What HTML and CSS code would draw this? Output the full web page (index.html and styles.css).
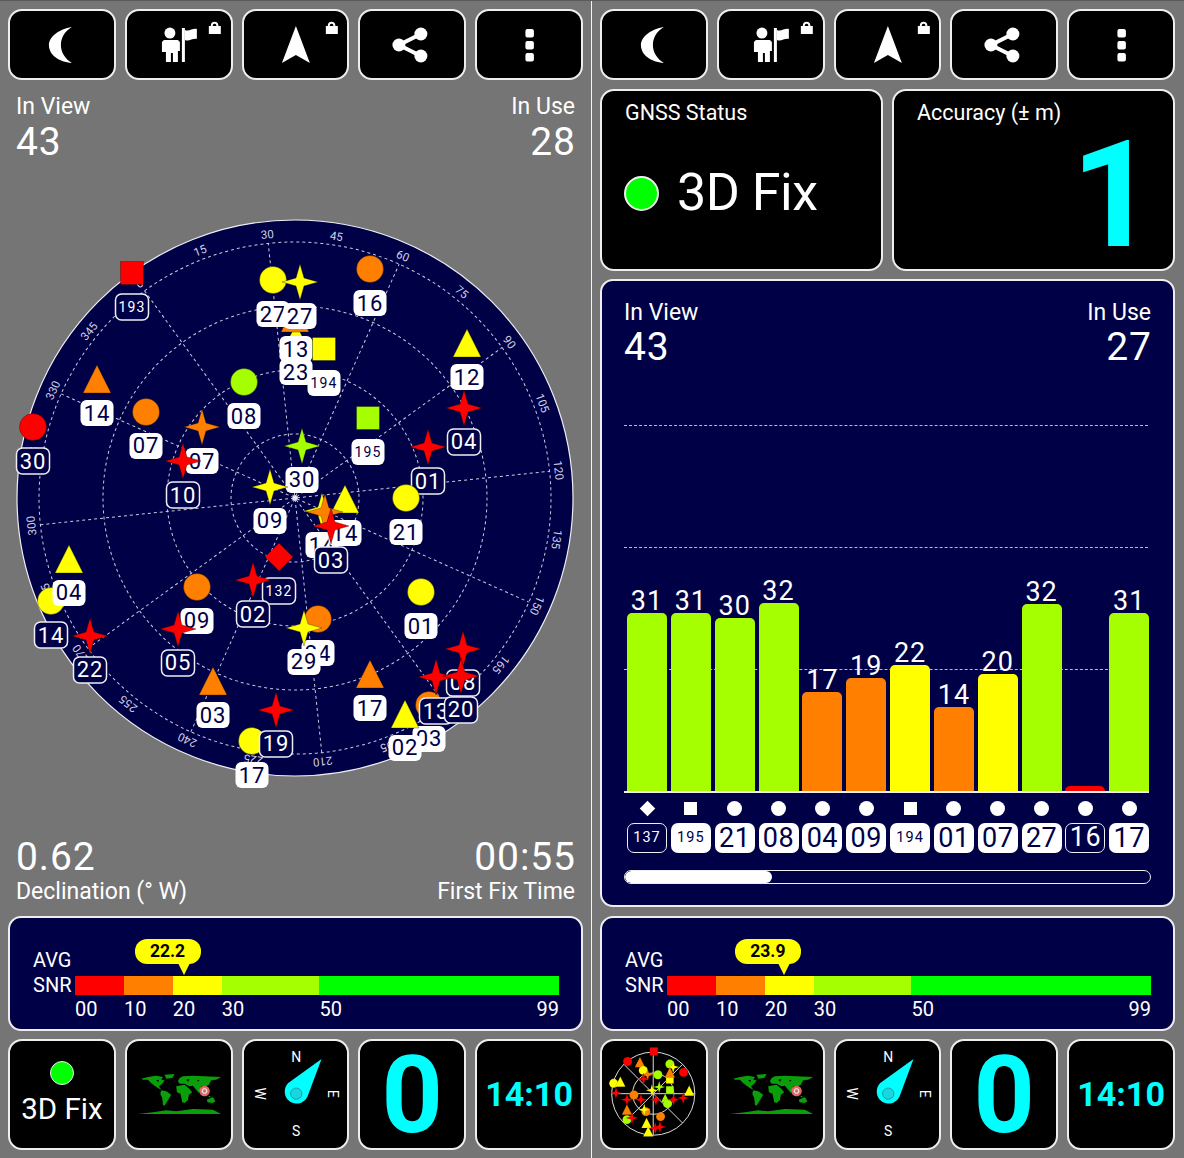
FILE: index.html
```html
<!DOCTYPE html>
<html lang="en">
<head>
<meta charset="utf-8">
<title>GPS Test</title>
<link rel="stylesheet" href="styles.css">
</head>
<body>
<svg class="defs" aria-hidden="true">
  <defs>
    <path id="star" d="M0-18L4-4 18 0 4 4 0 18-4 4-18 0-4-4Z"/>
    <path id="tri" d="M0-14L14 14H-14Z"/>
    <circle id="cir" r="13.5"/>
    <rect id="sq" x="-11.5" y="-11.5" width="23" height="23"/>
    <path id="dia" d="M0-14L14 0 0 14-14 0Z"/>
    <symbol id="i-moon" viewBox="2 2 104 67"><path class="ic" d="M64 18C51 20 41 28 41 36 41 46 51 53 64 54 57 50 53 43 53 36 53 29 57 22 64 18Z"/></symbol>
    <symbol id="i-flag" viewBox="2 2 104 67">
      <circle class="ic" cx="45" cy="24" r="5.5"/>
      <path class="ic" d="M39 31H53L55 33V42H53V53H48V44H46V53H41V43H37V33Z"/>
      <path class="ic" d="M57 19H60V53H57Z"/>
      <path class="ic" d="M60 21C64 23 68 19 72 20V30C68 29 64 33 60 31Z"/>
      <path class="ic" d="M86 17V16A3.800 3.800 0 0 1 93.500 16V17H96V25H84V17ZM88 17H91.500V16A1.800 1.800 0 0 0 88 16Z"/>
    </symbol>
    <symbol id="i-nav" viewBox="2 2 104 67">
      <path class="ic" d="M54 17L68 54 54 46 40 54Z"/>
      <path class="ic" d="M86 17V16A3.800 3.800 0 0 1 93.500 16V17H96V25H84V17ZM88 17H91.500V16A1.800 1.800 0 0 0 88 16Z"/>
    </symbol>
    <symbol id="i-share" viewBox="2 2 104 67">
      <circle class="ic" cx="63" cy="25" r="6.5"/><circle class="ic" cx="41" cy="36" r="6.5"/><circle class="ic" cx="63" cy="47" r="6.5"/>
      <path class="il" d="M63 25L41 36 63 47"/>
    </symbol>
    <symbol id="i-dots" viewBox="2 2 104 67">
      <rect class="ic" x="50.500" y="20" width="8.500" height="8.500" rx="2"/><rect class="ic" x="50.500" y="32" width="8.500" height="8.500" rx="2"/><rect class="ic" x="50.500" y="44" width="8.500" height="8.500" rx="2"/>
    </symbol>
    <symbol id="i-world" viewBox="378 34 312 321">
      <g class="land">
        <path d="M421 147L441 142 466 138 486 142 481 150 491 152 484 162 474 170 481 180 471 175 461 168 448 158 441 150 426 150Z"/>
        <path d="M491 135L521 133 514 145 496 147Z"/>
        <path d="M481 182L496 185 511 195 501 212 491 228 486 225 484 205 478 192Z"/>
        <path d="M531 155L536 145 546 140 576 138 661 142 646 150 631 152 624 165 616 170 601 170 594 190 586 180 576 168 566 170 551 162 536 162Z"/>
        <path d="M526 170L551 165 566 178 574 188 564 195 561 212 551 220 544 218 539 192 528 188Z"/>
        <path d="M601 195L612 196 621 200 610 199ZM622 198L630 200 626 204Z"/>
        <path d="M618 210L636 202 644 215 636 220 620 218Z"/>
        <path d="M411 253L456 248 496 242 526 245 576 238 636 240 661 253Z"/>
      </g>
      <path class="sea" d="M466 152L474 150 472 158ZM556 150L566 148 562 156ZM590 150L596 152 590 156ZM520 140L524 145 518 146Z"/>
      <circle class="pin" cx="611" cy="184" r="16"/>
      <circle class="pin-in" cx="611" cy="184" r="7"/>
    </symbol>
    <symbol id="i-compass" viewBox="729 34 312 321">
      <path class="needle" d="M962 88L922 195A36 36 0 1 1 862 160Z"/>
      <circle class="needle-in" cx="886" cy="192" r="17"/>
      <text class="cp" x="886" y="97">N</text>
      <text class="cp" x="886" y="320">S</text>
      <text class="cp" transform="translate(981 192) rotate(90)">E</text>
      <text class="cp" transform="translate(761 192) rotate(90)">W</text>
    </symbol>
  </defs>
</svg>

<main class="screen">
  <section class="pane">
    <nav class="toolbar">
      <button class="tile"><svg class="fill"><use href="#i-moon"/></svg></button>
      <button class="tile"><svg class="fill"><use href="#i-flag"/></svg></button>
      <button class="tile"><svg class="fill"><use href="#i-nav"/></svg></button>
      <button class="tile"><svg class="fill"><use href="#i-share"/></svg></button>
      <button class="tile"><svg class="fill"><use href="#i-dots"/></svg></button>
    </nav>

    <div class="mid">
      <div class="stats">
        <div class="stat"><span class="cap">In View</span><span class="num">43</span></div>
        <div class="stat end"><span class="cap">In Use</span><span class="num">28</span></div>
      </div>

      <svg class="radar" viewBox="0 161 591 677">
        <circle class="disc" cx="295" cy="498" r="278"/>
        <g transform="translate(295 498) rotate(-36)">
          <g class="grid">
            <circle r="64"/><circle r="128"/><circle r="192"/><circle r="256"/>
            <path d="M0-256V256M-128-221.700L128 221.700M-221.700-128L221.700 128M-256 0H256M-221.700 128L221.700-128M-128 221.700L128-221.700"/>
          </g>
          <circle class="hub" r="2.500"/>
          <g class="ticks">
            <text transform="rotate(0) translate(0 -261)">0</text>
            <text transform="rotate(15) translate(0 -261)">15</text>
            <text transform="rotate(30) translate(0 -261)">30</text>
            <text transform="rotate(45) translate(0 -261)">45</text>
            <text transform="rotate(60) translate(0 -261)">60</text>
            <text transform="rotate(75) translate(0 -261)">75</text>
            <text transform="rotate(90) translate(0 -261)">90</text>
            <text transform="rotate(105) translate(0 -261)">105</text>
            <text transform="rotate(120) translate(0 -261)">120</text>
            <text transform="rotate(135) translate(0 -261)">135</text>
            <text transform="rotate(150) translate(0 -261)">150</text>
            <text transform="rotate(165) translate(0 -261)">165</text>
            <text transform="rotate(180) translate(0 -261)">180</text>
            <text transform="rotate(195) translate(0 -261)">195</text>
            <text transform="rotate(210) translate(0 -261)">210</text>
            <text transform="rotate(225) translate(0 -261)">225</text>
            <text transform="rotate(240) translate(0 -261)">240</text>
            <text transform="rotate(255) translate(0 -261)">255</text>
            <text transform="rotate(270) translate(0 -261)">270</text>
            <text transform="rotate(285) translate(0 -261)">285</text>
            <text transform="rotate(300) translate(0 -261)">300</text>
            <text transform="rotate(315) translate(0 -261)">315</text>
            <text transform="rotate(330) translate(0 -261)">330</text>
            <text transform="rotate(345) translate(0 -261)">345</text>
          </g>
        </g>

        <g class="s r d" transform="translate(132 273)"><use href="#sq"/><rect/><text class="n3" y="39">193</text></g>
        <g class="s r d" transform="translate(33 427)"><use href="#cir"/><rect/><text y="42">30</text></g>
        <g class="s o" transform="translate(97 379)"><use href="#tri"/><rect/><text y="42">14</text></g>
        <g class="s o" transform="translate(146 412)"><use href="#cir"/><rect/><text y="41">07</text></g>
        <g class="s o" transform="translate(202 427)"><use href="#star"/><rect/><text y="42">07</text></g>
        <g class="s r d" transform="translate(183 461)"><use href="#star"/><rect/><text y="42">10</text></g>
        <g class="s l" transform="translate(244 382)"><use href="#cir"/><rect/><text y="42">08</text></g>
        <g class="s y" transform="translate(296 338)"><use href="#tri"/></g>
        <g class="s o" transform="translate(295 318)"><use href="#tri"/></g>
        <g class="s y" transform="translate(273 280)"><use href="#cir"/><rect/><text y="42">27</text></g>
        <g class="s y" transform="translate(300 282)"><use href="#star"/><rect/><text y="42">27</text></g>
        <g class="s o" transform="translate(296 315)"><rect/><text y="42">13</text></g>
        <g class="s y" transform="translate(296 338)"><rect/><text y="42">23</text></g>
        <g class="s o" transform="translate(370 269)"><use href="#cir"/><rect/><text y="42">16</text></g>
        <g class="s y" transform="translate(324 349)"><use href="#sq"/><rect/><text class="n3" y="39">194</text></g>
        <g class="s l" transform="translate(368 418)"><use href="#sq"/><rect/><text class="n3" y="39">195</text></g>
        <g class="s y" transform="translate(467 343)"><use href="#tri"/><rect/><text y="42">12</text></g>
        <g class="s r d" transform="translate(464 408)"><use href="#star"/><rect/><text y="41">04</text></g>
        <g class="s r d" transform="translate(428 447)"><use href="#star"/><rect/><text y="42">01</text></g>
        <g class="s y" transform="translate(406 498)"><use href="#cir"/><rect/><text y="42">21</text></g>
        <g class="s l" transform="translate(302 446)"><use href="#star"/><rect/><text y="41">30</text></g>
        <g class="s y" transform="translate(270 487)"><use href="#star"/><rect/><text y="41">09</text></g>
        <g class="s y" transform="translate(322 511)"><use href="#star"/><rect/><text y="42">14</text></g>
        <g class="s y" transform="translate(345 499)"><use href="#tri"/><rect/><text y="42">14</text></g>
        <g class="s o" transform="translate(325 512)"><use href="#star"/></g>
        <g class="s r d" transform="translate(331 526)"><use href="#star"/><rect/><text y="42">03</text></g>
        <g class="s r" transform="translate(279 557)"><use href="#dia"/></g>
        <g class="s r d" transform="translate(279 557)"><rect/><text class="n3" y="39">132</text></g>
        <g class="s r d" transform="translate(253 580)"><use href="#star"/><rect/><text y="42">02</text></g>
        <g class="s o" transform="translate(197 587)"><use href="#cir"/><rect/><text y="41">09</text></g>
        <g class="s r d" transform="translate(178 629)"><use href="#star"/><rect/><text y="41">05</text></g>
        <g class="s y d" transform="translate(51 601)"><use href="#cir"/><rect/><text y="42">14</text></g>
        <g class="s y" transform="translate(69 559)"><use href="#tri"/><rect/><text y="41">04</text></g>
        <g class="s r d" transform="translate(90 636)"><use href="#star"/><rect/><text y="41">22</text></g>
        <g class="s o" transform="translate(213 681)"><use href="#tri"/><rect/><text y="42">03</text></g>
        <g class="s y" transform="translate(252 741)"><use href="#cir"/><rect/><text y="42">17</text></g>
        <g class="s r d" transform="translate(276 710)"><use href="#star"/><rect/><text y="41">19</text></g>
        <g class="s o" transform="translate(318 619)"><use href="#cir"/><rect/><text y="42">24</text></g>
        <g class="s y" transform="translate(304 628)"><use href="#star"/><rect/><text y="41">29</text></g>
        <g class="s y" transform="translate(421 592)"><use href="#cir"/><rect/><text y="42">01</text></g>
        <g class="s o" transform="translate(370 674)"><use href="#tri"/><rect/><text y="42">17</text></g>
        <g class="s o" transform="translate(429 705)"><use href="#cir"/><rect/><text y="41">03</text></g>
        <g class="s r d" transform="translate(463 649)"><use href="#star"/><rect/><text y="41">08</text></g>
        <g class="s r d" transform="translate(436 677)"><use href="#star"/><rect/><text y="42">13</text></g>
        <g class="s r d" transform="translate(461 676)"><use href="#star"/><rect/><text y="41">20</text></g>
        <g class="s y" transform="translate(405 714)"><use href="#tri"/><rect/><text y="41">02</text></g>
      </svg>

      <div class="stats">
        <div class="stat"><span class="num">0.62</span><span class="cap">Declination (° W)</span></div>
        <div class="stat end"><span class="num">00:55</span><span class="cap">First Fix Time</span></div>
      </div>
    </div>

    <div class="snr">
      <div class="snr-names"><span>AVG</span><span>SNR</span></div>
      <div class="snr-scale">
        <div class="snr-bar">
          <i class="seg c-r" style="flex-grow:10"></i><i class="seg c-o" style="flex-grow:10"></i><i class="seg c-y" style="flex-grow:10"></i><i class="seg c-l" style="flex-grow:20"></i><i class="seg c-g" style="flex-grow:49"></i>
          <div class="bubble" style="left:22.42%">22.2</div>
        </div>
        <div class="snr-ticks">
          <span style="flex-grow:10">00</span><span style="flex-grow:10">10</span><span style="flex-grow:10">20</span><span style="flex-grow:20">30</span><span class="last" style="flex-grow:49"><b>50</b><b>99</b></span>
        </div>
      </div>
    </div>

    <div class="dock">
      <div class="tile fixcell"><i class="dot"></i><span>3D Fix</span></div>
      <div class="tile"><svg class="fill"><use href="#i-world"/></svg></div>
      <div class="tile"><svg class="fill"><use href="#i-compass"/></svg></div>
      <div class="tile big">0</div>
      <div class="tile clock">14:10</div>
    </div>
  </section>

  <section class="pane">
    <nav class="toolbar">
      <button class="tile"><svg class="fill"><use href="#i-moon"/></svg></button>
      <button class="tile"><svg class="fill"><use href="#i-flag"/></svg></button>
      <button class="tile"><svg class="fill"><use href="#i-nav"/></svg></button>
      <button class="tile"><svg class="fill"><use href="#i-share"/></svg></button>
      <button class="tile"><svg class="fill"><use href="#i-dots"/></svg></button>
    </nav>

    <div class="duo">
      <div class="tile card">
        <span class="cap plain">GNSS Status</span>
        <div class="fixrow"><i class="dot large"></i><span>3D Fix</span></div>
      </div>
      <div class="tile card">
        <span class="cap plain">Accuracy (± m)</span>
        <div class="acc">1</div>
      </div>
    </div>

    <div class="panel">
      <div class="stats inner">
        <div class="stat"><span class="cap">In View</span><span class="num">43</span></div>
        <div class="stat end"><span class="cap">In Use</span><span class="num">27</span></div>
      </div>
      <div class="chart">
        <div class="lines"><i></i><i></i><i></i></div>
        <div class="bars">
          <div class="col"><span>31</span><i class="c-l" style="height:178px"></i></div>
          <div class="col"><span>31</span><i class="c-l" style="height:178px"></i></div>
          <div class="col"><span>30</span><i class="c-l" style="height:173px"></i></div>
          <div class="col"><span>32</span><i class="c-l" style="height:188px"></i></div>
          <div class="col"><span>17</span><i class="c-o" style="height:99px"></i></div>
          <div class="col"><span>19</span><i class="c-o" style="height:113px"></i></div>
          <div class="col"><span>22</span><i class="c-y" style="height:126px"></i></div>
          <div class="col"><span>14</span><i class="c-o" style="height:84px"></i></div>
          <div class="col"><span>20</span><i class="c-y" style="height:117px"></i></div>
          <div class="col"><span>32</span><i class="c-l" style="height:187px"></i></div>
          <div class="col"><i class="c-r" style="height:5px"></i></div>
          <div class="col"><span>31</span><i class="c-l" style="height:178px"></i></div>
        </div>
      </div>
      <div class="marks">
        <i class="m-d"></i><i class="m-s"></i><i class="m-c"></i><i class="m-c"></i><i class="m-c"></i><i class="m-c"></i><i class="m-s"></i><i class="m-c"></i><i class="m-c"></i><i class="m-c"></i><i class="m-c"></i><i class="m-c"></i>
      </div>
      <div class="ids">
        <span class="id dark tiny">137</span><span class="id tiny">195</span><span class="id">21</span><span class="id">08</span><span class="id">04</span><span class="id">09</span><span class="id tiny">194</span><span class="id">01</span><span class="id">07</span><span class="id">27</span><span class="id dark">16</span><span class="id">17</span>
      </div>
      <div class="scroll"><i></i></div>
    </div>

    <div class="snr">
      <div class="snr-names"><span>AVG</span><span>SNR</span></div>
      <div class="snr-scale">
        <div class="snr-bar">
          <i class="seg c-r" style="flex-grow:10"></i><i class="seg c-o" style="flex-grow:10"></i><i class="seg c-y" style="flex-grow:10"></i><i class="seg c-l" style="flex-grow:20"></i><i class="seg c-g" style="flex-grow:49"></i>
          <div class="bubble" style="left:24.14%">23.9</div>
        </div>
        <div class="snr-ticks">
          <span style="flex-grow:10">00</span><span style="flex-grow:10">10</span><span style="flex-grow:10">20</span><span style="flex-grow:20">30</span><span class="last" style="flex-grow:49"><b>50</b><b>99</b></span>
        </div>
      </div>
    </div>

    <div class="dock">
      <div class="tile">
        <svg class="fill" viewBox="18 34 312 321">
          <g class="mini-grid"><circle cx="172" cy="192" r="125"/><circle cx="172" cy="192" r="62"/><path d="M172 67V317M47 192H297M84 104L260 280M84 280L260 104"/></g>
          <g class="s r"><use href="#sq" transform="translate(174 65) scale(1.05)"/><use href="#cir" x="95" y="95"/></g>
          <g class="s o"><use href="#tri" transform="translate(132 97) scale(1.1)"/></g>
          <g class="s l"><use href="#cir" x="222" y="103"/></g>
          <g class="s y"><use href="#star" x="232" y="112"/><use href="#cir" x="142" y="122"/></g>
          <g class="s o"><use href="#star" x="155" y="135"/></g>
          <g class="s r"><use href="#star" x="143" y="148"/></g>
          <g class="s l"><use href="#cir" x="186" y="135"/></g>
          <g class="s y"><use href="#sq" x="222" y="150"/></g>
          <g class="s o"><use href="#tri" transform="translate(222 128) scale(1.1)"/></g>
          <g class="s r"><use href="#cir" x="263" y="128"/></g>
          <g class="s y"><use href="#cir" x="53" y="161"/><use href="#tri" transform="translate(73 156) scale(1.1)"/><use href="#star" x="168" y="182"/></g>
          <g class="s l"><use href="#star" x="190" y="172"/><use href="#sq" x="222" y="181"/></g>
          <g class="s y"><use href="#tri" transform="translate(280 183) scale(1.1)"/></g>
          <g class="s r"><use href="#star" x="60" y="190"/></g>
          <g class="s o"><use href="#cir" x="114" y="196"/></g>
          <g class="s l"><use href="#tri" transform="translate(208 205) scale(.9)"/><use href="#cir" x="215" y="222"/></g>
          <g class="s r"><use href="#star" x="93" y="210"/><use href="#star" x="135" y="210"/><use href="#star" x="180" y="210"/><use href="#star" x="233" y="210"/><use href="#star" x="262" y="205"/></g>
          <g class="s o"><use href="#tri" transform="translate(93 240) scale(1.1)"/><use href="#cir" x="150" y="246"/></g>
          <g class="s y"><use href="#star" x="145" y="240"/></g>
          <g class="s o"><use href="#cir" x="194" y="261"/></g>
          <g class="s l"><use href="#cir" x="93" y="270"/></g>
          <g class="s r"><use href="#star" x="108" y="265"/></g>
          <g class="s y"><use href="#tri" transform="translate(152 280) scale(1.1)"/></g>
          <g class="s r"><use href="#star" x="178" y="296"/><use href="#star" x="192" y="292"/></g>
          <g class="s y"><use href="#tri" transform="translate(157 305) scale(1.1)"/></g>
        </svg>
      </div>
      <div class="tile"><svg class="fill"><use href="#i-world"/></svg></div>
      <div class="tile"><svg class="fill"><use href="#i-compass"/></svg></div>
      <div class="tile big">0</div>
      <div class="tile clock">14:10</div>
    </div>
  </section>
</main>
</body>
</html>
```

FILE: styles.css
```css
* { box-sizing: border-box; }
html, body { margin: 0; padding: 0; }
body {
  width: 1184px;
  height: 1158px;
  overflow: hidden;
  background: #757575;
  color: #fff;
  font-family: Roboto, "Liberation Sans", sans-serif;
}
.defs { width: 0; height: 0; display: block; }
.screen { display: flex; width: 1184px; height: 1158px; border-top: 1px solid #5a5a5a; }
.pane {
  width: 592px;
  height: 1157px;
  padding: 8px 8px 7px 8px;
  display: flex;
  flex-direction: column;
  gap: 9px;
  border-right: 1px solid #f4f4f4;
}
.pane:last-child { border-right: 0; padding-right: 9px; }

.tile {
  background: #000;
  border: 2px solid #eee;
  border-radius: 14px;
  padding: 0;
  margin: 0;
  color: #fff;
  min-width: 0;
}
.fill { display: block; width: 100%; height: 100%; }
.toolbar .fill { height: 67px; }
.dock .fill { height: 107px; }
.ic { fill: #fff; }
.il { fill: none; stroke: #fff; stroke-width: 4; }

.toolbar, .dock {
  display: grid;
  grid-template-columns: repeat(5, minmax(0, 1fr));
  column-gap: 9px;
}
.toolbar { height: 71px; flex: none; grid-template-rows: 71px; }
.dock { height: 111px; flex: none; grid-template-rows: 111px; }

.mid {
  flex: none;
  height: 818px;
  margin: 0 -8px;
  padding: 5px 0 2px;
  display: flex;
  flex-direction: column;
}
.stats { display: flex; justify-content: space-between; padding: 0 16px; flex: none; }
.stat { display: flex; flex-direction: column; }
.stat.end { align-items: flex-end; }
.cap { font-size: 23px; line-height: 26px; font-weight: 400; }
.cap.plain { font-size: 21.5px; }
.num { font-size: 39px; line-height: 38px; font-weight: 400; letter-spacing: .9px; }
.stat.end .num { margin-right: -.9px; }
.cap + .num, .num + .cap { margin-top: 3px; }
.inner .cap + .num { margin-top: 2px; }
.radar { display: block; flex: none; width: 591px; height: 677px; }

.disc { fill: #000046; stroke: #eeeef4; stroke-width: 1.2; }
.grid circle, .grid path { fill: none; stroke: #c9cbe0; stroke-width: 1; stroke-dasharray: 3 3; }
.hub { fill: #e8e8f0; }
.ticks text { fill: #cfd1e4; font-size: 11.5px; text-anchor: middle; }

.s { stroke: none; }
.s use { stroke: rgba(0, 0, 0, .3); stroke-width: 1; }
.r { fill: #f00; }
.o { fill: #ff8000; }
.y { fill: #ff0; }
.l { fill: #a6ff00; }
.s rect { x: -16.5px; y: 21px; width: 33px; height: 26px; rx: 6px; fill: #fff; stroke: none; }
.s text { fill: #000046; stroke: none; font-size: 22px; font-weight: 400; text-anchor: middle; letter-spacing: 1px; }
.s text.n3 { font-size: 14px; font-weight: 400; letter-spacing: 1.2px; }
.s.d rect { fill: #000046; stroke: #eeeef4; stroke-width: 1.5; }
.s.d text { fill: #fff; }

.snr {
  flex: none;
  height: 115px;
  margin-bottom: -1px;
  background: #000046;
  border: 2px solid #eee;
  border-radius: 13px;
  padding: 0 22px 0 23px;
  display: flex;
  align-items: flex-start;
}
.snr-names { display: flex; flex-direction: column; width: 42px; padding-top: 30px; font-size: 20px; line-height: 25px; font-weight: 400; }
.snr-scale { flex: 1; padding-top: 58px; }
.snr-bar { position: relative; display: flex; height: 19px; }
.seg { flex: 1 1 0; display: block; }
.c-r { background: #f00; }
.c-o { background: #ff8000; }
.c-y { background: #ff0; }
.c-l { background: #a6ff00; }
.c-g { background: #0f0; }
.snr-ticks { display: flex; margin-top: 2px; font-size: 20px; line-height: 24px; font-weight: 400; }
.snr-ticks span { flex: 1 1 0; }
.snr-ticks .last { display: flex; justify-content: space-between; }
.snr-ticks b { font-weight: 400; }
.bubble {
  position: absolute;
  top: -37px;
  width: 66px;
  height: 25px;
  margin-left: -49px;
  background: #ff0;
  border-radius: 12px;
  color: #000;
  font-size: 17.5px;
  font-weight: 700;
  line-height: 25px;
  text-align: center;
}
.bubble::after {
  content: "";
  position: absolute;
  left: 43px;
  top: 24px;
  border: 6px solid transparent;
  border-top: 12px solid #ff0;
  border-bottom: 0;
}

.fixcell { display: flex; flex-direction: column; align-items: center; }
.dot { display: block; border-radius: 50%; background: #0f0; border: 1.5px solid #eee; }
.fixcell .dot { width: 24px; height: 24px; margin-top: 20px; }
.fixcell span { font-size: 29.5px; line-height: 36px; font-weight: 400; margin-top: 6px; }
.big {
  color: #0ff;
  font-size: 107px;
  font-weight: 700;
  line-height: 109px;
  text-align: center;
}
.clock {
  color: #0ff;
  font-size: 34px;
  font-weight: 700;
  line-height: 107px;
  text-align: center;
}
.land path { fill: #0a9f0a; }
.sea { fill: #000; }
.pin { fill: #e06a6a; }
.pin-in { fill: #e06a6a; stroke: #fff; stroke-width: 3; }
.needle { fill: #0ff; }
.needle-in { fill: #19d5e0; stroke: #0c7f8a; stroke-width: 2; }
.cp { fill: #fff; font-size: 42px; text-anchor: middle; font-weight: 400; }

.duo { display: grid; grid-template-columns: 1fr 1fr; column-gap: 9px; height: 181px; flex: none; }
.card { padding: 9px 23px; display: flex; flex-direction: column; }
.fixrow { display: flex; align-items: center; gap: 18px; margin-top: 37px; margin-left: -1px; font-size: 52px; line-height: 60px; font-weight: 400; letter-spacing: -.5px; }
.dot.large { width: 35px; height: 35px; border-width: 2px; }
.acc { color: #0ff; font-size: 148px; line-height: 128px; font-weight: 700; text-align: right; margin-top: 6px; margin-right: -6px; }

.panel {
  flex: none;
  height: 628px;
  background: #000046;
  border: 2px solid #eee;
  border-radius: 13px;
  padding: 19px 22px 0;
}
.stats.inner { padding: 0; height: 125px; align-items: flex-start; }
.chart { display: grid; height: 368px; width: 524px; }
.lines, .bars { grid-area: 1 / 1; }
.lines { display: flex; flex-direction: column; }
.lines i { display: block; height: 122px; border-top: 1px dashed #b8bace; }
.bars { display: grid; grid-template-columns: repeat(12, 40px); column-gap: 3.85px; align-items: end; padding-left: 3px; border-bottom: 2px solid #eee; margin-right: -1px; }
.col { display: flex; flex-direction: column; align-items: center; }
.col span { font-size: 27px; line-height: 30px; font-weight: 400; letter-spacing: 1px; margin-bottom: -3px; }
.col i { display: block; width: 40px; border-radius: 5px 5px 0 0; }
.marks { display: grid; grid-template-columns: repeat(12, 40px); column-gap: 3.85px; padding-left: 3px; height: 28px; align-items: center; justify-items: center; margin-top: 1px; }
.m-c { display: block; width: 15px; height: 15px; border-radius: 50%; background: #fff; }
.m-s { display: block; width: 13px; height: 13px; background: #fff; }
.m-d { display: block; width: 11px; height: 11px; background: #fff; transform: rotate(45deg); }
.ids { display: grid; grid-template-columns: repeat(12, 40px); column-gap: 3.85px; padding-left: 3px; margin-top: 1px; }
.id { display: block; height: 30px; border-radius: 7px; background: #fff; color: #000046; text-align: center; font-size: 27px; line-height: 30px; font-weight: 400; letter-spacing: .5px; }
.id.tiny { font-size: 14.5px; letter-spacing: 1px; }
.id.dark { background: #000046; color: #fff; border: 1.5px solid #eee; line-height: 27px; }
.scroll { margin-top: 17px; height: 14px; width: 527px; border: 1.5px solid #eee; border-radius: 7px; background: #000046; overflow: hidden; }
.scroll i { display: block; height: 100%; width: 28%; background: #fff; border-radius: 6px; }

.mini-grid circle, .mini-grid path { fill: none; stroke: #ddd; stroke-width: 3; }
```
